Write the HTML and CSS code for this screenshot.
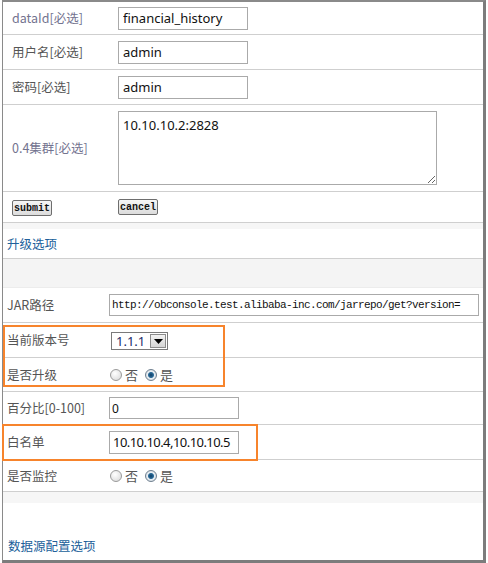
FILE: index.html
```html
<!DOCTYPE html>
<html>
<head>
<meta charset="utf-8">
<link rel="stylesheet" href="styles.css">
</head>
<body>
<div class="frame">
  <div class="row up h33">
    <span class="lbl muted">dataId[必选]</span>
    <div class="field"><input class="txt w130" value="financial_history"></div>
  </div>
  <div class="row up h35">
    <span class="lbl">用户名[必选]</span>
    <div class="field"><input class="txt w130" value="admin"></div>
  </div>
  <div class="row up h35">
    <span class="lbl">密码[必选]</span>
    <div class="field"><input class="txt w130" value="admin"></div>
  </div>
  <div class="row up h87">
    <span class="lbl muted">0.4集群[必选]</span>
    <div class="field"><textarea class="area">10.10.10.2:2828</textarea></div>
  </div>
  <div class="row up h31 btnrow">
    <span class="lbl"><button class="btn">submit</button></span>
    <div class="field"><button class="btn">cancel</button></div>
  </div>
  <div class="section h36">
    <div class="band b6"></div>
    <div class="heading">升级选项</div>
  </div>
  <div class="grayband"></div>
  <div class="row low h35">
    <span class="lbl">JAR路径</span>
    <div class="field"><input class="txt jar" value="http://obconsole.test.alibaba-inc.com/jarrepo/get?version="></div>
  </div>
  <div class="row low h35">
    <span class="lbl">当前版本号</span>
    <div class="field">
      <div class="select"><span class="selval">1.1.1</span><span class="selbtn"><svg width="9" height="5" viewBox="0 0 9 5"><path d="M0 0h9L4.5 5z" fill="#000"/></svg></span></div>
    </div>
  </div>
  <div class="row low h34">
    <span class="lbl">是否升级</span>
    <div class="field radios">
      <span class="radio"></span><span class="ropt">否</span>
      <span class="radio on"></span><span class="ropt">是</span>
    </div>
  </div>
  <div class="row low h33">
    <span class="lbl">百分比[0-100]</span>
    <div class="field"><input class="txt w130 small" value="0"></div>
  </div>
  <div class="row low h35">
    <span class="lbl">白名单</span>
    <div class="field"><input class="txt w130 big" value="10.10.10.4,10.10.10.5"></div>
  </div>
  <div class="row low h32">
    <span class="lbl">是否监控</span>
    <div class="field radios">
      <span class="radio"></span><span class="ropt">否</span>
      <span class="radio on"></span><span class="ropt">是</span>
    </div>
  </div>
  <div class="section last">
    <div class="band b11"></div>
    <div class="heading bottom">数据源配置选项</div>
  </div>
  <div class="hl hl1"></div>
  <div class="hl hl2"></div>
</div>
</body>
</html>
```
FILE: styles.css
```css
* { box-sizing: border-box; }
html, body { margin: 0; padding: 0; background: #fff; }
body { font-family: "Noto Sans CJK SC", "Noto Sans", sans-serif; font-size: 12px; color: #555; }

.frame {
  position: relative;
  margin-left: 2px;
  width: 484px;
  height: 563px;
  border-top: 2px solid #8a8a8a;
  border-left: 1px solid #8a8a8a;
  border-right: 3px solid #7c7c7c;
  border-bottom: 3px solid #7c7c7c;
  display: flex;
  flex-direction: column;
}

.row {
  display: flex;
  align-items: center;
  border-bottom: 1px solid #cfcfcf;
  flex: none;
}
.row.up { padding-left: 9px; }
.row.up .lbl { width: 106px; }
.row.low { padding-left: 4px; }
.row.low .lbl { width: 102px; }

.h31 { height: 31px; }
.h32 { height: 32px; }
.h33 { height: 33px; }
.h34 { height: 34px; }
.h35 { height: 35px; }
.h36 { height: 36px; }
.h87 { height: 87px; }

.lbl { font-size: 12.5px; color: #555; line-height: 16px; white-space: nowrap; flex: none; }
.lbl.muted { color: #73738f; }

.field { display: flex; align-items: center; }

.txt {
  height: 23px;
  border: 1px solid #aaaaaa;
  padding: 0 4px;
  font-family: "Noto Sans", "Noto Sans CJK SC", sans-serif;
  font-size: 13px;
  color: #111;
  background: #fff;
  outline: none;
}
.w130 { width: 130px; }
.txt.small { height: 22px; font-size: 12px; padding-left: 2px; }
.txt.big { font-size: 13px; padding: 0 2px 0 3px; letter-spacing: -0.55px; }
.txt.jar {
  width: 370px;
  height: 22px;
  font-family: "Liberation Mono", monospace;
  font-size: 11px;
  letter-spacing: -0.6px;
  padding-left: 2px;
}

.area {
  width: 319px;
  height: 74px;
  margin-top: -1px;
  border: 1px solid #aaaaaa;
  padding: 4px 4px;
  font-family: "Noto Sans", sans-serif;
  font-size: 13px;
  color: #111;
  resize: both;
  outline: none;
}

.btnrow .lbl { width: 107px; }
.btn {
  height: 16px;
  padding: 0 1px;
  border: 1px solid #6e6e6e;
  border-radius: 2px;
  background: linear-gradient(#f6f6f6, #dcdcdc);
  font-family: "Liberation Mono", monospace;
  font-weight: bold;
  font-size: 10px;
  line-height: 13px;
  color: #111;
}

.section { flex: none; display: flex; flex-direction: column; border-bottom: 1px solid #cfcfcf; }
.section.last { flex: 1; border-bottom: none; }
.band { background: #f6f6f6; flex: none; }
.b6 { height: 6px; }
.b11 { height: 11px; }
.heading { color: #20609a; font-size: 12.5px; padding-left: 4px; margin-top: 7px; line-height: 16px; }
.heading.bottom { margin-top: 35px; padding-left: 5px; }

.grayband { height: 29px; background: #f4f4f4; flex: none; border-bottom: 1px solid #ececec; }

.select {
  margin-left: 2px;
  margin-top: 2px;
  width: 57px;
  height: 18px;
  border: 1px solid #7a7a7a;
  display: flex;
  align-items: center;
  background: #fff;
}
.selval { flex: 1; padding-left: 4px; font-family: "Noto Sans", sans-serif; font-size: 13px; color: #1a2a6a; line-height: 16px; }
.selbtn {
  width: 16px;
  height: 14px;
  margin-right: 1px;
  border: 1px solid #8c8c8c;
  background: linear-gradient(#f2f2f2, #d4d4d4);
  display: flex;
  align-items: center;
  justify-content: center;
}

.radios { padding-left: 1px; gap: 0; }
.radio {
  width: 12px;
  height: 12px;
  border-radius: 50%;
  border: 1px solid #9a9a9a;
  background: radial-gradient(circle at 40% 35%, #ffffff, #d6d6d6);
  flex: none;
}
.radio.on {
  border-color: #6f7f8f;
  background: radial-gradient(circle, #0f3f66 0, #2a6a98 2.5px, #e8eef3 3.5px, #cfd8df 6px);
}
.ropt { font-size: 13px; color: #555; margin: 0 7px 0 3px; line-height: 16px; }

.hl { position: absolute; border: 2px solid #f7842c; }
.hl1 { left: 0; top: 323px; width: 222px; height: 62px; }
.hl2 { left: -1px; top: 422px; width: 256px; height: 37px; }
```
